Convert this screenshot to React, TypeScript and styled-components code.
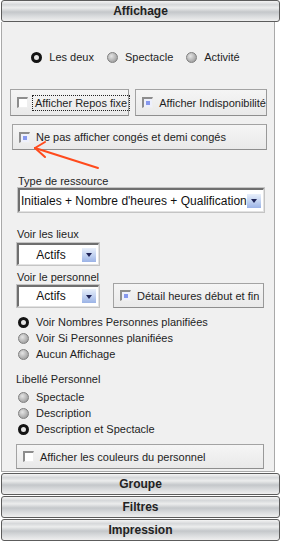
import React from "react";
import styled, { createGlobalStyle, css } from "styled-components";

const GlobalStyle = createGlobalStyle`
  html, body {
    margin: 0;
    padding: 0;
    background: #ffffff;
  }
  body {
    font-family: "Liberation Sans", Arial, sans-serif;
    font-size: 11px;
    color: #1e1e1e;
  }
`;

const Page = styled.div`
  width: 281px;
  height: 544px;
  box-sizing: border-box;
  padding: 0 1px;
  overflow: hidden;
`;

const SectionHeader = styled.div<{ $gap?: number }>`
  height: 22px;
  margin-top: ${(p) => p.$gap ?? 0}px;
  box-sizing: border-box;
  border: 1px solid #5c5c5c;
  border-radius: 3px;
  background: linear-gradient(
    to bottom,
    #f4f4f4 0%,
    #d6d8da 18%,
    #eceded 34%,
    #c4c7ca 55%,
    #d9dbdd 76%,
    #efefef 100%
  );
  text-align: center;
  font-weight: bold;
  font-size: 12px;
  line-height: 20px;
  color: #222;
`;

const Panel = styled.div`
  position: relative;
  margin-right: 5px;
  box-sizing: border-box;
  border: 1px solid #a9a9a9;
  border-top: none;
  background: #f0f0f0;
  padding: 28px 7px 2px 8px;
  display: flex;
  flex-direction: column;
  align-items: flex-start;
`;

const RadioRow = styled.div`
  align-self: stretch;
  display: flex;
  justify-content: center;
  gap: 13px;
  height: 14px;
  padding-right: 6px;
`;

const RadioItem = styled.label<{ $h?: number }>`
  display: flex;
  align-items: center;
  gap: 7px;
  height: ${(p) => p.$h ?? 14}px;
  white-space: nowrap;
`;

const RadioDot = styled.span<{ $on?: boolean }>`
  width: 11px;
  height: 11px;
  box-sizing: border-box;
  border-radius: 50%;
  flex: none;
  ${(p) =>
    p.$on
      ? css`
          border: 3px solid #141414;
          background: #e6e6e6;
        `
      : css`
          border: 1px solid #7f7f7f;
          background: radial-gradient(circle at 38% 35%, #e4e4e4 0%, #b4b4b4 55%, #8e8e8e 100%);
        `}
`;

const BoxRow = styled.div`
  align-self: stretch;
  display: flex;
  gap: 6px;
  margin-top: 25px;
`;

const GroupBox = styled.div<{ $w?: number; $h?: number; $mt?: number; $ml?: number }>`
  ${(p) => (p.$w ? `width: ${p.$w}px;` : "flex: 1;")}
  height: ${(p) => p.$h ?? 26}px;
  margin-top: ${(p) => p.$mt ?? 0}px;
  margin-left: ${(p) => p.$ml ?? 0}px;
  box-sizing: border-box;
  border: 1px solid #a3a3a3;
  border-bottom-color: #8e8e8e;
  border-right-color: #999;
  background: linear-gradient(to bottom, #f5f5f5, #e9e9e9);
  display: flex;
  align-items: center;
  gap: 6px;
  padding-left: 6px;
  white-space: nowrap;
`;

const Check = styled.span<{ $checked?: boolean }>`
  width: 11px;
  height: 11px;
  flex: none;
  box-sizing: border-box;
  border-style: solid;
  border-width: 2px 1px 1px 2px;
  border-color: #8d8d8d #efefef #efefef #8d8d8d;
  background: #ffffff;
  display: flex;
  align-items: center;
  justify-content: center;
  ${(p) =>
    p.$checked &&
    css`
      background: #eef0fb;
      &::after {
        content: "";
        width: 4px;
        height: 4px;
        background: #8698ee;
      }
    `}
`;

const FocusText = styled.span`
  outline: 1px dotted #222;
  outline-offset: 1px;
  padding: 0 1px;
`;

const FieldLabel = styled.div<{ $mt: number; $ml: number }>`
  margin-top: ${(p) => p.$mt}px;
  margin-left: ${(p) => p.$ml}px;
  height: 14px;
  line-height: 14px;
`;

const Select = styled.div<{ $w: number; $h: number; $mt?: number; $ml: number }>`
  width: ${(p) => p.$w}px;
  height: ${(p) => p.$h}px;
  margin-top: ${(p) => p.$mt ?? 0}px;
  margin-left: ${(p) => p.$ml}px;
  box-sizing: border-box;
  background: #ffffff;
  border-style: solid;
  border-width: 2px 1px 1px 2px;
  border-color: #6f6f6f #e2e2e2 #e2e2e2 #6f6f6f;
  box-shadow: 0 0 0 1px #c4c4c4;
  display: flex;
  align-items: center;
  padding-right: 2px;
  flex: none;
`;

const SelectText = styled.span<{ $center?: boolean }>`
  flex: 1;
  font-family: "Liberation Sans", Arial, sans-serif;
  font-size: 12px;
  color: #111;
  padding-left: 1px;
  white-space: nowrap;
  text-align: ${(p) => (p.$center ? "center" : "left")};
`;

const DropButton = styled.span`
  width: 14px;
  height: 14px;
  flex: none;
  box-sizing: border-box;
  background: linear-gradient(to bottom, #e9f0fb 0%, #c3d3f1 50%, #9bb3e6 100%);
  display: flex;
  align-items: center;
  justify-content: center;
  &::after {
    content: "";
    border-left: 3px solid transparent;
    border-right: 3px solid transparent;
    border-top: 4px solid #1d2255;
    margin-top: 1px;
  }
`;

const PersonRow = styled.div`
  display: flex;
  align-items: center;
  margin-top: -1px;
  margin-left: 7px;
`;

const RadioList = styled.div<{ $mt: number }>`
  display: flex;
  flex-direction: column;
  margin-top: ${(p) => p.$mt}px;
  margin-left: 8px;
`;

const Arrow = styled.svg`
  position: absolute;
  left: 28px;
  top: 116px;
`;

type Choice = { label: string; on?: boolean };

const afficherChoices: Choice[] = [
  { label: "Les deux", on: true },
  { label: "Spectacle" },
  { label: "Activité" },
];

const planifChoices: Choice[] = [
  { label: "Voir Nombres Personnes planifiées", on: true },
  { label: "Voir Si Personnes planifiées" },
  { label: "Aucun Affichage" },
];

const libelleChoices: Choice[] = [
  { label: "Spectacle" },
  { label: "Description" },
  { label: "Description et Spectacle", on: true },
];

export default function App() {
  return (
    <>
      <GlobalStyle />
      <Page>
        <SectionHeader>Affichage</SectionHeader>
        <Panel>
          <RadioRow>
            {afficherChoices.map((c) => (
              <RadioItem key={c.label}>
                <RadioDot $on={c.on} />
                {c.label}
              </RadioItem>
            ))}
          </RadioRow>

          <BoxRow>
            <GroupBox $w={120} $h={27}>
              <Check />
              <FocusText>Afficher Repos fixe</FocusText>
            </GroupBox>
            <GroupBox $h={27}>
              <Check $checked />
              Afficher Indisponibilité
            </GroupBox>
          </BoxRow>

          <GroupBox $w={255} $mt={8} $ml={2}>
            <Check $checked />
            Ne pas afficher congés et demi congés
          </GroupBox>

          {/* flèche rouge vers la case à cocher */}
          <Arrow width="80" height="40" viewBox="0 0 80 40">
            <g stroke="#ff4a1c" strokeWidth="2" fill="none" strokeLinecap="round">
              <line x1="5" y1="10" x2="68" y2="30" />
              <line x1="5" y1="10" x2="15" y2="4" />
              <line x1="5" y1="10" x2="15" y2="19" />
            </g>
          </Arrow>

          <FieldLabel $mt={24} $ml={8}>Type de ressource</FieldLabel>
          <Select $w={246} $h={24} $ml={8}>
            <SelectText>Initiales + Nombre d'heures + Qualification</SelectText>
            <DropButton />
          </Select>

          <FieldLabel $mt={15} $ml={7}>Voir les lieux</FieldLabel>
          <Select $w={82} $h={22} $mt={2} $ml={7}>
            <SelectText $center>Actifs</SelectText>
            <DropButton />
          </Select>

          <FieldLabel $mt={5} $ml={7}>Voir le personnel</FieldLabel>
          <PersonRow>
            <Select $w={82} $h={22} $ml={0}>
              <SelectText $center>Actifs</SelectText>
              <DropButton />
            </Select>
            <GroupBox $w={151} $h={25} $ml={14}>
              <Check $checked />
              Détail heures début et fin
            </GroupBox>
          </PersonRow>

          <RadioList $mt={6}>
            {planifChoices.map((c) => (
              <RadioItem key={c.label} $h={16}>
                <RadioDot $on={c.on} />
                {c.label}
              </RadioItem>
            ))}
          </RadioList>

          <FieldLabel $mt={10} $ml={6}>Libellé Personnel</FieldLabel>
          <RadioList $mt={3}>
            {libelleChoices.map((c) => (
              <RadioItem key={c.label} $h={16}>
                <RadioDot $on={c.on} />
                {c.label}
              </RadioItem>
            ))}
          </RadioList>

          <GroupBox $w={248} $h={25} $mt={7} $ml={6}>
            <Check />
            Afficher les couleurs du personnel
          </GroupBox>
        </Panel>
        <SectionHeader $gap={1}>Groupe</SectionHeader>
        <SectionHeader $gap={1}>Filtres</SectionHeader>
        <SectionHeader $gap={1}>Impression</SectionHeader>
      </Page>
    </>
  );
}
